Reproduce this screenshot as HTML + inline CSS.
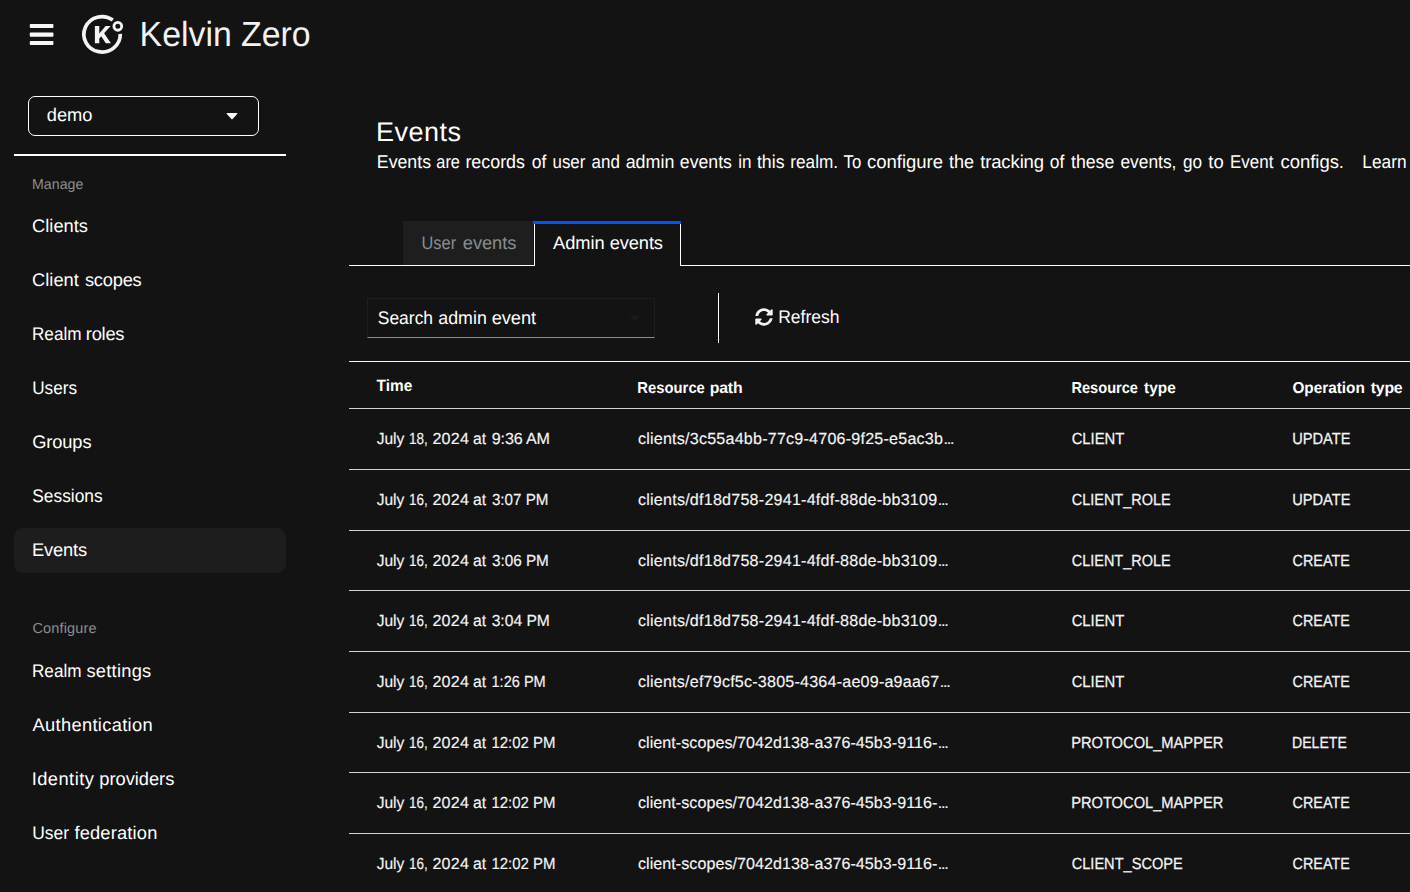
<!DOCTYPE html>
<html lang="en">
<head>
<meta charset="utf-8">
<title>Kelvin Zero - Events</title>
<style>
*{box-sizing:border-box;margin:0;padding:0}
html,body{width:1410px;height:892px;overflow:hidden;background:#131313}
body{position:relative;font-family:"Liberation Sans",sans-serif;color:#fff}
.a{position:absolute}
.t{position:absolute;white-space:nowrap;line-height:1;color:#fff;transform-origin:0 0;text-rendering:geometricPrecision}
.e{letter-spacing:-1.25px;margin-left:.3px}
.hl{position:absolute;left:349px;right:0;height:1px;background:#d2d2d2}
</style>
</head>
<body>
<!-- masthead -->
<svg class="a" style="left:28px;top:22px" width="28" height="26" viewBox="28 22 28 26">
  <rect x="29.8" y="24" width="23.6" height="4.05" rx=".7" fill="#f7f7f7"/>
  <rect x="29.8" y="32.45" width="23.6" height="4.3" rx=".7" fill="#f7f7f7"/>
  <rect x="29.8" y="41.05" width="23.6" height="3.95" rx=".7" fill="#f7f7f7"/>
</svg>
<svg class="a" style="left:78px;top:10px" width="52" height="50" viewBox="78 10 52 50">
  <path d="M 112.78 19.98 A 18.2 17.7 0 1 0 120.27 33.84" fill="none" stroke="#f4f4f4" stroke-width="3.7" stroke-linecap="butt"/>
  <circle cx="117.8" cy="26.35" r="3.9" fill="none" stroke="#f4f4f4" stroke-width="2.8"/>
  <path d="M 94.9 25.9 H 99.3 V 33.6 L 105.6 25.9 H 110.6 L 104.1 33.3 L 110.9 43.2 H 105.8 L 101.2 36.3 L 99.3 38.4 V 43.2 H 94.9 Z" fill="#f4f4f4"/>
</svg>

<!-- sidebar -->
<div class="a" style="left:28px;top:96px;width:231px;height:40px;border:1px solid #fff;border-radius:7px"></div>
<svg class="a" style="left:225px;top:111px" width="14" height="10" viewBox="0 0 14 10"><path d="M2.2 2 H11.8 Q12.9 2.1 12.2 3 L7.6 7.9 Q7 8.5 6.4 7.9 L1.8 3 Q1.1 2.1 2.2 2 Z" fill="#f6f6f6"/></svg>
<div class="a" style="left:14px;top:154px;width:272px;height:2px;background:#fff"></div>
<div class="a" style="left:14px;top:528px;width:272px;height:45px;border-radius:9px;background:#1d1d1d"></div>

<!-- tabs -->
<div class="a" style="left:403px;top:221px;width:130px;height:44px;background:#1e1e1e"></div>
<div class="a" style="left:533px;top:221px;width:148px;height:3px;background:#0053ff"></div>
<div class="a" style="left:534px;top:224px;width:1px;height:41px;background:#fff"></div>
<div class="a" style="left:680px;top:224px;width:1px;height:41px;background:#fff"></div>
<div class="a" style="left:349px;top:265px;width:186px;height:1px;background:#fff"></div>
<div class="a" style="left:680px;top:265px;right:0;height:1px;background:#fff"></div>

<!-- toolbar -->
<div class="a" style="left:367px;top:298px;width:288px;height:40px;border:1px solid #1e1e1e;border-bottom-color:#8a8d90"></div>
<svg class="a" style="left:628px;top:315px" width="14" height="8" viewBox="0 0 14 8"><path d="M1 0.6 H13 L7 7 Z" fill="#191919"/></svg>
<div class="a" style="left:718px;top:293px;width:1px;height:50px;background:#fff"></div>
<svg class="a" style="left:755px;top:308px" width="18" height="18" viewBox="0 0 512 512"><path fill="#f2f2f2" d="M370.72 133.28C339.458 104.008 298.888 87.962 255.848 88c-77.458.068-144.328 53.178-162.791 126.85-1.344 5.363-6.122 9.15-11.651 9.15H24.103c-7.498 0-13.194-6.807-11.807-14.176C33.933 94.924 134.813 8 256 8c66.448 0 126.791 26.136 171.315 68.685L463.03 40.97C478.149 25.851 504 36.559 504 57.941V192c0 13.255-10.745 24-24 24H345.941c-21.382 0-32.09-25.851-16.971-40.971l41.75-41.749zM32 296h134.059c21.382 0 32.09 25.851 16.971 40.971l-41.75 41.75c31.262 29.273 71.835 45.319 114.876 45.28 77.418-.07 144.315-53.144 162.787-126.849 1.344-5.363 6.122-9.15 11.651-9.15h57.304c7.498 0 13.194 6.807 11.807 14.176C478.067 417.076 377.187 504 256 504c-66.448 0-126.791-26.136-171.315-68.685L48.97 471.03C33.851 486.149 8 475.441 8 454.059V320c0-13.255 10.745-24 24-24z"/></svg>

<!-- table lines -->
<div class="hl" style="top:361px;background:#f8f8f8"></div>
<div class="hl" style="top:408px"></div>
<div class="hl" style="top:469px"></div>
<div class="hl" style="top:530px"></div>
<div class="hl" style="top:590px"></div>
<div class="hl" style="top:651px"></div>
<div class="hl" style="top:712px"></div>
<div class="hl" style="top:772px"></div>
<div class="hl" style="top:833px"></div>

<!-- text -->
<span class="t" style="left:0;top:18.10px;font-size:34.8px;transform:translateX(139.61px) scaleX(0.9716);color:#f2f2f2;">Kelvin Zero</span>
<span class="t" style="left:46.73px;top:106.11px;font-size:18.3px;letter-spacing:0.029px;">demo</span>
<span class="t" style="left:0;top:178.25px;font-size:14.5px;transform:translateX(32.07px) scaleX(0.9772);color:#8a8d90;">Manage</span>
<span class="t" style="left:32.04px;top:217.01px;font-size:18.3px;letter-spacing:0.014px;">Clients</span>
<span class="t" style="left:32.04px;top:271.11px;font-size:18.3px;letter-spacing:0.021px;">Client</span>
<span class="t" style="left:84.94px;top:271.11px;font-size:18.3px;letter-spacing:-0.230px;">scopes</span>
<span class="t" style="left:0;top:325.11px;font-size:18.3px;transform:translateX(31.99px) scaleX(0.9380);">Realm</span>
<span class="t" style="left:85.84px;top:325.11px;font-size:18.3px;letter-spacing:-0.248px;">roles</span>
<span class="t" style="left:0;top:379.01px;font-size:18.3px;transform:translateX(32.22px) scaleX(0.9379);">Users</span>
<span class="t" style="left:32.24px;top:433.01px;font-size:18.3px;letter-spacing:-0.128px;">Groups</span>
<span class="t" style="left:0;top:487.01px;font-size:18.3px;transform:translateX(32.31px) scaleX(0.9468);">Sessions</span>
<span class="t" style="left:32.09px;top:541.01px;font-size:18.3px;letter-spacing:-0.183px;">Events</span>
<span class="t" style="left:32.48px;top:622.00px;font-size:14.5px;color:#8a8d90;letter-spacing:0.160px;">Configure</span>
<span class="t" style="left:0;top:662.01px;font-size:18.3px;transform:translateX(31.99px) scaleX(0.9380);">Realm</span>
<span class="t" style="left:86.39px;top:662.01px;font-size:18.3px;letter-spacing:0.260px;">settings</span>
<span class="t" style="left:32.56px;top:716.01px;font-size:18.3px;letter-spacing:0.326px;">Authentication</span>
<span class="t" style="left:31.68px;top:770.01px;font-size:18.3px;letter-spacing:0.466px;">Identity</span>
<span class="t" style="left:99.33px;top:770.01px;font-size:18.3px;letter-spacing:-0.030px;">providers</span>
<span class="t" style="left:0;top:824.01px;font-size:18.3px;transform:translateX(32.15px) scaleX(0.9538);">User</span>
<span class="t" style="left:74.39px;top:824.01px;font-size:18.3px;letter-spacing:0.189px;">federation</span>
<span class="t" style="left:375.98px;top:118.60px;font-size:27px;letter-spacing:0.497px;">Events</span>
<span class="t" style="left:0;top:153.21px;font-size:18.5px;transform:translateX(376.82px) scaleX(0.9580);">Events</span>
<span class="t" style="left:0;top:153.21px;font-size:18.5px;transform:translateX(436.32px) scaleX(0.8833);">are</span>
<span class="t" style="left:0;top:153.21px;font-size:18.5px;transform:translateX(465.40px) scaleX(0.9654);">records</span>
<span class="t" style="left:0;top:153.21px;font-size:18.5px;transform:translateX(531.76px) scaleX(0.9485);">of</span>
<span class="t" style="left:0;top:153.21px;font-size:18.5px;transform:translateX(552.52px) scaleX(0.9138);">user</span>
<span class="t" style="left:0;top:153.21px;font-size:18.5px;transform:translateX(591.56px) scaleX(0.9157);">and</span>
<span class="t" style="left:0;top:153.21px;font-size:18.5px;transform:translateX(625.69px) scaleX(0.9654);">admin</span>
<span class="t" style="left:0;top:153.21px;font-size:18.5px;transform:translateX(679.86px) scaleX(0.9559);">events</span>
<span class="t" style="left:0;top:153.21px;font-size:18.5px;transform:translateX(738.31px) scaleX(0.9206);">in</span>
<span class="t" style="left:0;top:153.21px;font-size:18.5px;transform:translateX(756.96px) scaleX(0.9560);">this</span>
<span class="t" style="left:0;top:153.21px;font-size:18.5px;transform:translateX(790.34px) scaleX(0.9277);">realm.</span>
<span class="t" style="left:0;top:153.21px;font-size:18.5px;transform:translateX(843.59px) scaleX(0.9058);">To</span>
<span class="t" style="left:866.94px;top:153.21px;font-size:18.5px;letter-spacing:-0.006px;">configure</span>
<span class="t" style="left:0;top:153.21px;font-size:18.5px;transform:translateX(948.96px) scaleX(0.9764);">the</span>
<span class="t" style="left:980.16px;top:153.21px;font-size:18.5px;letter-spacing:-0.124px;">tracking</span>
<span class="t" style="left:0;top:153.21px;font-size:18.5px;transform:translateX(1049.86px) scaleX(0.9432);">of</span>
<span class="t" style="left:0;top:153.21px;font-size:18.5px;transform:translateX(1070.96px) scaleX(0.9583);">these</span>
<span class="t" style="left:0;top:153.21px;font-size:18.5px;transform:translateX(1120.46px) scaleX(0.9380);">events,</span>
<span class="t" style="left:0;top:153.21px;font-size:18.5px;transform:translateX(1182.88px) scaleX(0.9287);">go</span>
<span class="t" style="left:1208.19px;top:153.21px;font-size:18.5px;letter-spacing:0.113px;">to</span>
<span class="t" style="left:0;top:153.21px;font-size:18.5px;transform:translateX(1230.07px) scaleX(0.9149);">Event</span>
<span class="t" style="left:1280.56px;top:153.21px;font-size:18.5px;letter-spacing:-0.042px;">configs.</span>
<span class="t" style="left:0;top:153.21px;font-size:18.5px;transform:translateX(1362.25px) scaleX(0.9355);">Learn</span>
<span class="t" style="left:0;top:234.01px;font-size:18.3px;transform:translateX(421.55px) scaleX(0.8949);color:#8a8d90;">User</span>
<span class="t" style="left:462.79px;top:234.01px;font-size:18.3px;color:#8a8d90;letter-spacing:-0.064px;">events</span>
<span class="t" style="left:553.01px;top:234.01px;font-size:18.3px;letter-spacing:-0.018px;">Admin</span>
<span class="t" style="left:609.66px;top:234.01px;font-size:18.3px;letter-spacing:-0.104px;">events</span>
<span class="t" style="left:0;top:309.01px;font-size:18.3px;transform:translateX(377.76px) scaleX(0.9550);">Search</span>
<span class="t" style="left:0;top:309.01px;font-size:18.3px;transform:translateX(438.31px) scaleX(0.9736);">admin</span>
<span class="t" style="left:491.71px;top:309.01px;font-size:18.3px;letter-spacing:-0.092px;">event</span>
<span class="t" style="left:0;top:308.01px;font-size:18.3px;transform:translateX(778.17px) scaleX(0.9576);">Refresh</span>
<span class="t" style="left:0;top:378.10px;font-size:16.3px;transform:translateX(376.58px) scaleX(0.9455);font-weight:700;">Time</span>
<span class="t" style="left:0;top:380.90px;font-size:15.85px;transform:translateX(637.37px) scaleX(0.9345);font-weight:700;">Resource</span>
<span class="t" style="left:709.63px;top:380.90px;font-size:15.85px;font-weight:700;letter-spacing:-0.165px;">path</span>
<span class="t" style="left:0;top:380.90px;font-size:15.85px;transform:translateX(1071.44px) scaleX(0.9217);font-weight:700;">Resource</span>
<span class="t" style="left:0;top:380.90px;font-size:15.85px;transform:translateX(1144.10px) scaleX(0.9708);font-weight:700;">type</span>
<span class="t" style="left:0;top:380.90px;font-size:15.85px;transform:translateX(1292.44px) scaleX(0.9674);font-weight:700;">Operation</span>
<span class="t" style="left:1370.85px;top:380.90px;font-size:15.85px;font-weight:700;letter-spacing:-0.254px;">type</span>
<span class="t" style="left:0;top:431.01px;font-size:16.1px;transform:translateX(376.67px) scaleX(0.9654);color:#f5f5f5;-webkit-text-stroke:0.15px;">July</span>
<span class="t" style="left:0;top:431.01px;font-size:16.1px;transform:translateX(409.10px) scaleX(0.8389);color:#f5f5f5;-webkit-text-stroke:0.15px;">18,</span>
<span class="t" style="left:432.39px;top:431.01px;font-size:16.1px;color:#f5f5f5;letter-spacing:0.272px;-webkit-text-stroke:0.15px;">2024</span>
<span class="t" style="left:0;top:431.01px;font-size:16.1px;transform:translateX(473.03px) scaleX(0.9790);color:#f5f5f5;-webkit-text-stroke:0.15px;">at</span>
<span class="t" style="left:491.82px;top:431.01px;font-size:16.1px;color:#f5f5f5;letter-spacing:-0.147px;-webkit-text-stroke:0.15px;">9:36 AM</span>
<span class="t" style="left:637.94px;top:431.01px;font-size:16.1px;color:#f5f5f5;letter-spacing:0.216px;-webkit-text-stroke:0.15px;">clients/3c55a4bb-77c9-4706-9f25-e5ac3b<span class="e">...</span></span>
<span class="t" style="left:0;top:431.01px;font-size:16.1px;transform:translateX(1071.63px) scaleX(0.9214);color:#f5f5f5;-webkit-text-stroke:0.25px;">CLIENT</span>
<span class="t" style="left:0;top:431.01px;font-size:16.1px;transform:translateX(1292.15px) scaleX(0.9095);color:#f5f5f5;-webkit-text-stroke:0.25px;">UPDATE</span>
<span class="t" style="left:0;top:492.01px;font-size:16.1px;transform:translateX(376.67px) scaleX(0.9654);color:#f5f5f5;-webkit-text-stroke:0.15px;">July</span>
<span class="t" style="left:0;top:492.01px;font-size:16.1px;transform:translateX(409.10px) scaleX(0.8389);color:#f5f5f5;-webkit-text-stroke:0.15px;">16,</span>
<span class="t" style="left:432.39px;top:492.01px;font-size:16.1px;color:#f5f5f5;letter-spacing:0.272px;-webkit-text-stroke:0.15px;">2024</span>
<span class="t" style="left:0;top:492.01px;font-size:16.1px;transform:translateX(473.03px) scaleX(0.9790);color:#f5f5f5;-webkit-text-stroke:0.15px;">at</span>
<span class="t" style="left:0;top:492.01px;font-size:16.1px;transform:translateX(491.92px) scaleX(0.9435);color:#f5f5f5;-webkit-text-stroke:0.15px;">3:07 PM</span>
<span class="t" style="left:637.94px;top:492.01px;font-size:16.1px;color:#f5f5f5;letter-spacing:0.228px;-webkit-text-stroke:0.15px;">clients/df18d758-2941-4fdf-88de-bb3109<span class="e">...</span></span>
<span class="t" style="left:0;top:492.01px;font-size:16.1px;transform:translateX(1071.71px) scaleX(0.8991);color:#f5f5f5;-webkit-text-stroke:0.25px;">CLIENT_ROLE</span>
<span class="t" style="left:0;top:492.01px;font-size:16.1px;transform:translateX(1292.15px) scaleX(0.9095);color:#f5f5f5;-webkit-text-stroke:0.25px;">UPDATE</span>
<span class="t" style="left:0;top:553.01px;font-size:16.1px;transform:translateX(376.67px) scaleX(0.9654);color:#f5f5f5;-webkit-text-stroke:0.15px;">July</span>
<span class="t" style="left:0;top:553.01px;font-size:16.1px;transform:translateX(409.10px) scaleX(0.8389);color:#f5f5f5;-webkit-text-stroke:0.15px;">16,</span>
<span class="t" style="left:432.39px;top:553.01px;font-size:16.1px;color:#f5f5f5;letter-spacing:0.272px;-webkit-text-stroke:0.15px;">2024</span>
<span class="t" style="left:0;top:553.01px;font-size:16.1px;transform:translateX(473.03px) scaleX(0.9790);color:#f5f5f5;-webkit-text-stroke:0.15px;">at</span>
<span class="t" style="left:0;top:553.01px;font-size:16.1px;transform:translateX(491.88px) scaleX(0.9505);color:#f5f5f5;-webkit-text-stroke:0.15px;">3:06 PM</span>
<span class="t" style="left:637.94px;top:553.01px;font-size:16.1px;color:#f5f5f5;letter-spacing:0.228px;-webkit-text-stroke:0.15px;">clients/df18d758-2941-4fdf-88de-bb3109<span class="e">...</span></span>
<span class="t" style="left:0;top:553.01px;font-size:16.1px;transform:translateX(1071.71px) scaleX(0.8991);color:#f5f5f5;-webkit-text-stroke:0.25px;">CLIENT_ROLE</span>
<span class="t" style="left:0;top:553.01px;font-size:16.1px;transform:translateX(1292.52px) scaleX(0.8934);color:#f5f5f5;-webkit-text-stroke:0.25px;">CREATE</span>
<span class="t" style="left:0;top:613.01px;font-size:16.1px;transform:translateX(376.67px) scaleX(0.9654);color:#f5f5f5;-webkit-text-stroke:0.15px;">July</span>
<span class="t" style="left:0;top:613.01px;font-size:16.1px;transform:translateX(409.10px) scaleX(0.8389);color:#f5f5f5;-webkit-text-stroke:0.15px;">16,</span>
<span class="t" style="left:432.39px;top:613.01px;font-size:16.1px;color:#f5f5f5;letter-spacing:0.272px;-webkit-text-stroke:0.15px;">2024</span>
<span class="t" style="left:0;top:613.01px;font-size:16.1px;transform:translateX(473.03px) scaleX(0.9790);color:#f5f5f5;-webkit-text-stroke:0.15px;">at</span>
<span class="t" style="left:0;top:613.01px;font-size:16.1px;transform:translateX(491.66px) scaleX(0.9712);color:#f5f5f5;-webkit-text-stroke:0.15px;">3:04 PM</span>
<span class="t" style="left:637.94px;top:613.01px;font-size:16.1px;color:#f5f5f5;letter-spacing:0.228px;-webkit-text-stroke:0.15px;">clients/df18d758-2941-4fdf-88de-bb3109<span class="e">...</span></span>
<span class="t" style="left:0;top:613.01px;font-size:16.1px;transform:translateX(1071.63px) scaleX(0.9214);color:#f5f5f5;-webkit-text-stroke:0.25px;">CLIENT</span>
<span class="t" style="left:0;top:613.01px;font-size:16.1px;transform:translateX(1292.52px) scaleX(0.8934);color:#f5f5f5;-webkit-text-stroke:0.25px;">CREATE</span>
<span class="t" style="left:0;top:674.01px;font-size:16.1px;transform:translateX(376.67px) scaleX(0.9654);color:#f5f5f5;-webkit-text-stroke:0.15px;">July</span>
<span class="t" style="left:0;top:674.01px;font-size:16.1px;transform:translateX(409.10px) scaleX(0.8389);color:#f5f5f5;-webkit-text-stroke:0.15px;">16,</span>
<span class="t" style="left:432.39px;top:674.01px;font-size:16.1px;color:#f5f5f5;letter-spacing:0.272px;-webkit-text-stroke:0.15px;">2024</span>
<span class="t" style="left:0;top:674.01px;font-size:16.1px;transform:translateX(473.03px) scaleX(0.9790);color:#f5f5f5;-webkit-text-stroke:0.15px;">at</span>
<span class="t" style="left:0;top:674.01px;font-size:16.1px;transform:translateX(491.48px) scaleX(0.9056);color:#f5f5f5;-webkit-text-stroke:0.15px;">1:26 PM</span>
<span class="t" style="left:637.94px;top:674.01px;font-size:16.1px;color:#f5f5f5;letter-spacing:0.211px;-webkit-text-stroke:0.15px;">clients/ef79cf5c-3805-4364-ae09-a9aa67<span class="e">...</span></span>
<span class="t" style="left:0;top:674.01px;font-size:16.1px;transform:translateX(1071.63px) scaleX(0.9214);color:#f5f5f5;-webkit-text-stroke:0.25px;">CLIENT</span>
<span class="t" style="left:0;top:674.01px;font-size:16.1px;transform:translateX(1292.52px) scaleX(0.8934);color:#f5f5f5;-webkit-text-stroke:0.25px;">CREATE</span>
<span class="t" style="left:0;top:735.01px;font-size:16.1px;transform:translateX(376.67px) scaleX(0.9654);color:#f5f5f5;-webkit-text-stroke:0.15px;">July</span>
<span class="t" style="left:0;top:735.01px;font-size:16.1px;transform:translateX(409.10px) scaleX(0.8389);color:#f5f5f5;-webkit-text-stroke:0.15px;">16,</span>
<span class="t" style="left:432.39px;top:735.01px;font-size:16.1px;color:#f5f5f5;letter-spacing:0.272px;-webkit-text-stroke:0.15px;">2024</span>
<span class="t" style="left:0;top:735.01px;font-size:16.1px;transform:translateX(473.03px) scaleX(0.9790);color:#f5f5f5;-webkit-text-stroke:0.15px;">at</span>
<span class="t" style="left:0;top:735.01px;font-size:16.1px;transform:translateX(491.42px) scaleX(0.9294);color:#f5f5f5;-webkit-text-stroke:0.15px;">12:02 PM</span>
<span class="t" style="left:637.94px;top:735.01px;font-size:16.1px;color:#f5f5f5;letter-spacing:0.050px;-webkit-text-stroke:0.15px;">client-scopes/7042d138-a376-45b3-9116-<span class="e">...</span></span>
<span class="t" style="left:0;top:735.01px;font-size:16.1px;transform:translateX(1071.13px) scaleX(0.9117);color:#f5f5f5;-webkit-text-stroke:0.25px;">PROTOCOL_MAPPER</span>
<span class="t" style="left:0;top:735.01px;font-size:16.1px;transform:translateX(1292.03px) scaleX(0.8743);color:#f5f5f5;-webkit-text-stroke:0.25px;">DELETE</span>
<span class="t" style="left:0;top:795.01px;font-size:16.1px;transform:translateX(376.67px) scaleX(0.9654);color:#f5f5f5;-webkit-text-stroke:0.15px;">July</span>
<span class="t" style="left:0;top:795.01px;font-size:16.1px;transform:translateX(409.10px) scaleX(0.8389);color:#f5f5f5;-webkit-text-stroke:0.15px;">16,</span>
<span class="t" style="left:432.39px;top:795.01px;font-size:16.1px;color:#f5f5f5;letter-spacing:0.272px;-webkit-text-stroke:0.15px;">2024</span>
<span class="t" style="left:0;top:795.01px;font-size:16.1px;transform:translateX(473.03px) scaleX(0.9790);color:#f5f5f5;-webkit-text-stroke:0.15px;">at</span>
<span class="t" style="left:0;top:795.01px;font-size:16.1px;transform:translateX(491.42px) scaleX(0.9294);color:#f5f5f5;-webkit-text-stroke:0.15px;">12:02 PM</span>
<span class="t" style="left:637.94px;top:795.01px;font-size:16.1px;color:#f5f5f5;letter-spacing:0.050px;-webkit-text-stroke:0.15px;">client-scopes/7042d138-a376-45b3-9116-<span class="e">...</span></span>
<span class="t" style="left:0;top:795.01px;font-size:16.1px;transform:translateX(1071.13px) scaleX(0.9117);color:#f5f5f5;-webkit-text-stroke:0.25px;">PROTOCOL_MAPPER</span>
<span class="t" style="left:0;top:795.01px;font-size:16.1px;transform:translateX(1292.52px) scaleX(0.8934);color:#f5f5f5;-webkit-text-stroke:0.25px;">CREATE</span>
<span class="t" style="left:0;top:856.01px;font-size:16.1px;transform:translateX(376.67px) scaleX(0.9654);color:#f5f5f5;-webkit-text-stroke:0.15px;">July</span>
<span class="t" style="left:0;top:856.01px;font-size:16.1px;transform:translateX(409.10px) scaleX(0.8389);color:#f5f5f5;-webkit-text-stroke:0.15px;">16,</span>
<span class="t" style="left:432.39px;top:856.01px;font-size:16.1px;color:#f5f5f5;letter-spacing:0.272px;-webkit-text-stroke:0.15px;">2024</span>
<span class="t" style="left:0;top:856.01px;font-size:16.1px;transform:translateX(473.03px) scaleX(0.9790);color:#f5f5f5;-webkit-text-stroke:0.15px;">at</span>
<span class="t" style="left:0;top:856.01px;font-size:16.1px;transform:translateX(491.42px) scaleX(0.9294);color:#f5f5f5;-webkit-text-stroke:0.15px;">12:02 PM</span>
<span class="t" style="left:637.94px;top:856.01px;font-size:16.1px;color:#f5f5f5;letter-spacing:0.050px;-webkit-text-stroke:0.15px;">client-scopes/7042d138-a376-45b3-9116-<span class="e">...</span></span>
<span class="t" style="left:0;top:856.01px;font-size:16.1px;transform:translateX(1071.71px) scaleX(0.9058);color:#f5f5f5;-webkit-text-stroke:0.25px;">CLIENT_SCOPE</span>
<span class="t" style="left:0;top:856.01px;font-size:16.1px;transform:translateX(1292.52px) scaleX(0.8934);color:#f5f5f5;-webkit-text-stroke:0.25px;">CREATE</span>
</body>
</html>
